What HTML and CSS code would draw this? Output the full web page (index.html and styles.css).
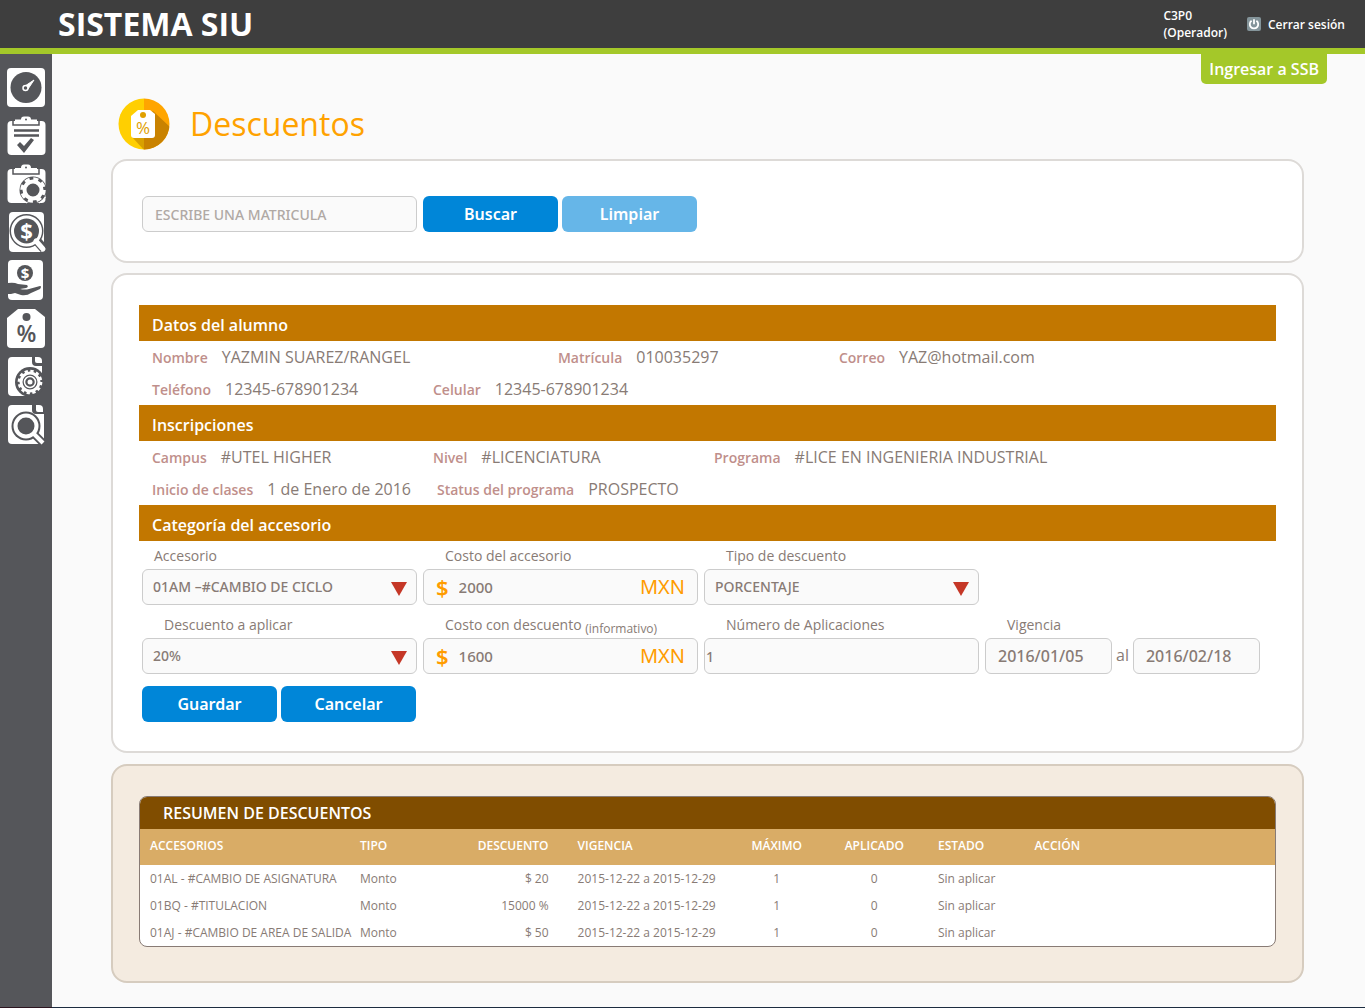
FILE: index.html
```html
<!DOCTYPE html>
<html lang="es">
<head>
<meta charset="utf-8">
<title>Sistema SIU - Descuentos</title>
<link rel="stylesheet" href="styles.css">
</head>
<body>
<header class="topbar">
  <div class="brand">SISTEMA SIU</div>
  <div class="user">C3P0<br>(Operador)</div>
  <a class="logout" href="#">
    <svg width="14" height="14" viewBox="0 0 14 14"><rect width="14" height="14" rx="2" fill="#84949a"/><path d="M4.6 3.8a4.2 4.2 0 1 0 4.8 0M7 2.2v5" fill="none" stroke="#fff" stroke-width="1.8"/></svg>
    Cerrar sesión
  </a>
</header>
<div class="layout">
  <nav class="sidebar" aria-label="Menú principal">
    <a href="#" aria-label="Tablero"><svg viewBox="0 0 40 40"><rect x="1" y="0" width="38" height="39" rx="4" fill="#fff"/><circle cx="20" cy="19.500" r="15.500" fill="#55565a"/><path d="M28 12l-9 6 3 3z" fill="#fff" stroke="#fff"/><circle cx="19.500" cy="20" r="2.500" fill="#55565a" stroke="#fff" stroke-width="1.500"/></svg></a>
    <a href="#" aria-label="Inscripciones"><svg viewBox="0 0 40 40"><rect x="1.500" y="5" width="38" height="34" rx="4" fill="#fff"/><path d="M7 4v5h26V4" fill="none" stroke="#55565a" stroke-width="1.500"/><path d="M9 3.500h6Q15 .5 18 .5h4Q25 .5 25 3.500h6V8H9z" fill="#fff"/><circle cx="20" cy="3.500" r="1" fill="#55565a"/><path d="M8 14.500h25M8 19.500h25" stroke="#55565a" stroke-width="2.500"/><path d="M11 29l3-3 4 4 7-8 3 2-10 13z" fill="#55565a"/></svg></a>
    <a href="#" aria-label="Configuración de trámites"><svg viewBox="0 0 40 40"><rect x="1.500" y="5" width="38" height="34" rx="4" fill="#fff"/><path d="M7 4v6h26V4" fill="none" stroke="#55565a" stroke-width="1.500"/><path d="M9 4h6Q15 .5 18 .5h4Q25 .5 25 4h6v4H9z" fill="#fff"/><circle cx="20" cy="3.500" r="1" fill="#55565a"/><circle cx="27" cy="26" r="13.500" fill="#55565a"/><circle cx="27" cy="26" r="8.500" fill="none" stroke="#fff" stroke-width="4"/><circle cx="27" cy="26" r="11" fill="none" stroke="#fff" stroke-width="3.500" stroke-dasharray="5 3.640"/><path d="M14.500 33a14 14 0 0 0 6 6M33.500 39a14 14 0 0 0 6-6" fill="none" stroke="#fff"/></svg></a>
    <a href="#" aria-label="Consulta de pagos"><svg viewBox="0 0 40 40"><rect x="3" y="0" width="35" height="40" rx="4" fill="#fff"/><circle cx="20.500" cy="19" r="17" fill="#55565a"/><path d="M31 29l7 8" stroke="#55565a" stroke-width="9"/><circle cx="20.500" cy="19" r="14" fill="#55565a" stroke="#fff" stroke-width="3"/><path d="M30 29l7 8" stroke="#fff" stroke-width="5" stroke-linecap="round"/><text x="20.500" y="27" class="icon-money">$</text></svg></a>
    <a href="#" aria-label="Pagos"><svg viewBox="0 0 40 40"><rect x="2" y="0" width="35" height="40" rx="4" fill="#fff"/><circle cx="19" cy="13" r="8" fill="#55565a"/><text x="19" y="18.500" class="icon-coin">$</text><path d="M2 23q6-1 10 1l9 1q2 2-1 3l-6 1q5 1 9 0l11-3q2 0 0 3l-9 4q-4 3-10 2l-6-2-4 1H2z" fill="#55565a"/></svg></a>
    <a href="#" aria-label="Descuentos"><svg viewBox="0 0 40 40"><path d="M12 1h17l10 8v27q0 4-4 4H5q-4 0-4-4V10z" fill="#fff"/><circle cx="20.500" cy="9" r="4" fill="#55565a"/><text x="20.500" y="34" class="icon-percent">%</text></svg></a>
    <a href="#" aria-label="Configuración"><svg viewBox="0 0 40 40"><path d="M6 1h20v5q0 4 4 4h6v12H24v18H6q-4 0-4-4V5q0-4 4-4z" fill="#fff"/><path d="M29 1h3q4 0 4 4v2h-5q-2 0-2-2z" fill="#fff"/><circle cx="24" cy="26" r="15" fill="#55565a"/><circle cx="24" cy="26" r="9" fill="none" stroke="#fff" stroke-width="3"/><circle cx="24" cy="26" r="11.100" fill="none" stroke="#fff" stroke-width="2.500" stroke-dasharray="3.300 2.512"/><circle cx="24" cy="26" r="5.500" fill="none" stroke="#fff" stroke-width="1.500"/><circle cx="24" cy="26" r="2.500" fill="#fff"/></svg></a>
    <a href="#" aria-label="Consultas"><svg viewBox="0 0 40 40"><path d="M6 1h20v5q0 4 4 4h8v26q0 4-4 4H6q-4 0-4-4V5q0-4 4-4z" fill="#fff"/><path d="M30 1h3q4 0 4 4v3h-5q-2 0-2-2z" fill="#fff"/><circle cx="20" cy="22" r="14.500" fill="#55565a"/><path d="M29 31l9 9" stroke="#55565a" stroke-width="8"/><circle cx="20" cy="22" r="10.500" fill="#55565a" stroke="#fff" stroke-width="4"/><circle cx="20" cy="22" r="7.500" fill="#55565a"/><path d="M28 30l9 9" stroke="#fff" stroke-width="4"/></svg></a>
  </nav>
  <main class="content">
    <a class="ssb" href="#">Ingresar a SSB</a>
    <div class="title">
      <svg width="52" height="52" viewBox="0 0 52 52" aria-hidden="true"><defs><clipPath id="disc"><circle cx="26" cy="26" r="25.500"/></clipPath></defs><g clip-path="url(#disc)"><path d="M0 0h26v52H0z" fill="#ffcf01"/><path d="M26 0h26v52H26z" fill="#ffa500"/><path d="M35 13l17 16v23H26V20z" fill="#c98200"/><path d="M14 39l12-5v18z" fill="#d8a000"/></g><path d="M20 12h12l5 4v21q0 3-3 3H16q-3 0-3-3V18z" fill="#fff"/><circle cx="25" cy="17" r="3" fill="#e0a000"/><text x="25" y="36" class="icon-tag">%</text></svg>
      <h1>Descuentos</h1>
    </div>
    <form class="panel search">
      <input class="box" type="text" placeholder="ESCRIBE UNA MATRICULA" aria-label="Matrícula">
      <div class="actions">
        <button class="btn" type="button">Buscar</button>
        <button class="btn light" type="button">Limpiar</button>
      </div>
    </form>
    <section class="panel detail">
      <h2>Datos del alumno</h2>
      <dl class="data wide">
        <div><dt>Nombre</dt><dd>YAZMIN SUAREZ/RANGEL</dd></div>
        <div><dt>Matrícula</dt><dd>010035297</dd></div>
        <div><dt>Correo</dt><dd>YAZ@hotmail.com</dd></div>
      </dl>
      <dl class="data">
        <div><dt>Teléfono</dt><dd>12345-678901234</dd></div>
        <div><dt>Celular</dt><dd>12345-678901234</dd></div>
      </dl>
      <h2>Inscripciones</h2>
      <dl class="data">
        <div><dt>Campus</dt><dd>#UTEL HIGHER</dd></div>
        <div><dt>Nivel</dt><dd>#LICENCIATURA</dd></div>
        <div class="span"><dt>Programa</dt><dd>#LICE EN INGENIERIA INDUSTRIAL</dd></div>
      </dl>
      <dl class="data inline">
        <div><dt>Inicio de clases</dt><dd>1 de Enero de 2016</dd></div>
        <div><dt>Status del programa</dt><dd>PROSPECTO</dd></div>
      </dl>
      <h2>Categoría del accesorio</h2>
      <form>
        <div class="fields">
          <div class="field near">
            <label for="accesorio">Accesorio</label>
            <div class="pick"><select class="box" id="accesorio"><option>01AM –#CAMBIO DE CICLO</option></select></div>
          </div>
          <div class="field">
            <label for="costo">Costo del accesorio</label>
            <div class="box money"><span class="sign">$</span><input id="costo" type="text" value="2000"><span>MXN</span></div>
          </div>
          <div class="field">
            <label for="tipo">Tipo de descuento</label>
            <div class="pick"><select class="box" id="tipo"><option>PORCENTAJE</option></select></div>
          </div>
        </div>
        <div class="fields">
          <div class="field">
            <label for="descuento">Descuento a aplicar</label>
            <div class="pick"><select class="box" id="descuento"><option>20%</option></select></div>
          </div>
          <div class="field">
            <label for="final">Costo con descuento <small>(informativo)</small></label>
            <div class="box money"><span class="sign">$</span><input id="final" type="text" value="1600"><span>MXN</span></div>
          </div>
          <div class="field">
            <label for="numero">Número de Aplicaciones</label>
            <input class="box tight" id="numero" type="text" value="1">
          </div>
          <div class="field">
            <label for="desde">Vigencia</label>
            <div class="range"><input class="box date" id="desde" type="text" value="2016/01/05"><span>al</span><input class="box date" type="text" value="2016/02/18" aria-label="Vigencia hasta"></div>
          </div>
        </div>
        <div class="actions">
          <button class="btn" type="button">Guardar</button>
          <button class="btn" type="button">Cancelar</button>
        </div>
      </form>
    </section>
    <section class="panel summary">
      <div class="card">
        <h3>RESUMEN DE DESCUENTOS</h3>
        <table>
          <colgroup><col class="c-acc"><col class="c-tipo"><col class="c-desc"><col class="c-vig"><col class="c-max"><col class="c-apl"><col class="c-est"><col></colgroup>
          <thead><tr><th>ACCESORIOS</th><th>TIPO</th><th class="num">DESCUENTO</th><th class="vig">VIGENCIA</th><th class="mid">MÁXIMO</th><th class="mid">APLICADO</th><th>ESTADO</th><th>ACCIÓN</th></tr></thead>
          <tbody>
            <tr><td>01AL - #CAMBIO DE ASIGNATURA</td><td>Monto</td><td class="num">$ 20</td><td class="vig">2015-12-22 a 2015-12-29</td><td class="mid">1</td><td class="mid">0</td><td>Sin aplicar</td><td></td></tr>
            <tr><td>01BQ - #TITULACION</td><td>Monto</td><td class="num">15000 %</td><td class="vig">2015-12-22 a 2015-12-29</td><td class="mid">1</td><td class="mid">0</td><td>Sin aplicar</td><td></td></tr>
            <tr><td>01AJ - #CAMBIO DE AREA DE SALIDA</td><td>Monto</td><td class="num">$ 50</td><td class="vig">2015-12-22 a 2015-12-29</td><td class="mid">1</td><td class="mid">0</td><td>Sin aplicar</td><td></td></tr>
          </tbody>
        </table>
      </div>
    </section>
  </main>
</div>
</body>
</html>
```
FILE: styles.css
```css
* { box-sizing: border-box; }
body {
  margin: 0;
  min-height: 100vh;
  display: flex;
  flex-direction: column;
  background: #fafafa;
  color: #887b75;
  font: 16px/24px "Open Sans", sans-serif;
}
h1, h2, h3, dl, dd { margin: 0; }
a { text-decoration: none; }

.topbar {
  display: flex;
  align-items: center;
  height: 54px;
  padding: 0 20px 0 58px;
  background: #3e3e3e;
  border-bottom: 6px solid #a4c829;
  color: #fff;
  font-size: 12px;
  font-weight: 600;
  line-height: 17px;
}
.brand { flex: 1; font-size: 32px; line-height: 48px; font-weight: 700; }
.logout { display: flex; align-items: center; gap: 7px; margin-left: 20px; color: #fff; }

.layout { display: flex; flex: 1; }
.sidebar {
  display: flex;
  flex-direction: column;
  gap: 8px;
  flex: none;
  width: 52px;
  padding: 14px 6px;
  background: #55565a;
  border-bottom: 1px solid #2c1420;
}
.sidebar a { display: block; height: 40px; }
.sidebar svg { display: block; width: 40px; height: 40px; overflow: visible; }
.icon-money, .icon-coin, .icon-percent, .icon-tag { font-family: "Open Sans", sans-serif; font-weight: 700; text-anchor: middle; fill: #fff; }
.icon-money { font-size: 22px; }
.icon-coin { font-size: 15px; }
.icon-percent { font-size: 23px; font-weight: 600; fill: #55565a; }
.icon-tag { font-size: 17px; font-weight: 500; fill: #e0a000; }

.content {
  position: relative;
  flex: 1;
  display: flex;
  flex-direction: column;
  gap: 10px;
  min-width: 0;
  padding: 44px 61px 24px 59px;
  border-bottom: 1px solid #1c2c40;
}
.ssb {
  position: absolute;
  top: 0;
  right: 38px;
  padding: 3px 8px;
  border-radius: 0 0 5px 5px;
  background: #a4c829;
  color: #fff;
  font-weight: 600;
}
.title { display: flex; align-items: center; gap: 20px; height: 51px; padding-left: 7px; }
.title h1 { font-size: 32px; line-height: 50px; font-weight: 400; color: #ffa200; }

.panel { background: #fff; border: 2px solid #dddad7; border-radius: 16px; padding: 30px 26px; }
.search { display: flex; gap: 6px; padding: 35px 29px 29px; }
.search .box { width: 275px; }
.search ::placeholder { color: #b0a9a5; opacity: 1; }

.box {
  display: block;
  width: 100%;
  height: 36px;
  padding: 0 12px;
  background: #fafafa;
  border: 1px solid #ccc;
  border-radius: 6px;
  color: #887b75;
  font: 500 14px/20px "Noto Sans", sans-serif;
}
.actions { display: flex; gap: 4px; }
.btn {
  width: 135px;
  height: 36px;
  padding: 0;
  border: 0;
  border-radius: 6px;
  background: #0086d8;
  color: #fff;
  font: 600 16px/20px "Noto Sans", sans-serif;
}
.btn.light { background: #66b6e8; }

h2 { height: 36px; padding: 2px 13px; background: #c27700; color: #fff; font-size: 16px; line-height: 36px; font-weight: 600; }
.data { display: grid; grid-template-columns: repeat(4, 1fr); padding-left: 13px; line-height: 32px; white-space: nowrap; }
.data.wide { grid-template-columns: 13fr 9fr 14fr; }
.data.inline { display: flex; gap: 26px; }
.data div { display: flex; align-items: baseline; height: 32px; gap: 14px; }
.data .span { grid-column: span 2; }
dt { font-size: 14px; font-weight: 600; color: #bf8f8b; }

.fields { display: grid; grid-template-columns: repeat(4, 1fr); padding: 0 10px 0 3px; }
.field { width: 275px; padding-bottom: 5px; }
.field label { display: block; height: 28px; padding-left: 22px; font-size: 14px; line-height: 30px; }
.near label { padding-left: 12px; }
small { font-size: 12px; vertical-align: -3px; line-height: 12px; }
.pick { position: relative; }
.pick select { appearance: none; padding: 0 10px; }
.pick::after {
  content: "";
  position: absolute;
  right: 10px;
  top: 13px;
  border: 8px solid transparent;
  border-top: 14px solid #c53727;
  border-bottom: 0;
  pointer-events: none;
}
.money { display: flex; align-items: center; gap: 10px; color: #ff9c00; font: 20px/34px "Noto Sans", sans-serif; }
.money .sign { font-size: 22px; font-weight: 600; }
.money input { flex: 1; min-width: 0; padding: 0; border: 0; background: none; color: #887b75; font: 500 15px/20px "Noto Sans", sans-serif; }
.tight { padding: 0 1px; }
.range { display: flex; gap: 4px; line-height: 34px; }
.range .date { width: 127px; font-size: 16px; }
.detail .actions { margin: 7px 3px 0; }
.detail { padding-bottom: 29px; }

.summary { background: #f4ebe0; border-color: #d6ccbf; margin-top: 1px; padding-bottom: 34px; }
.card { overflow: hidden; background: #fff; border: 1px solid #887b75; border-radius: 8px; }
h3 { height: 32px; padding-left: 23px; background: #804d00; color: #fff; font-size: 16px; line-height: 32px; font-weight: 600; }
table { width: 100%; table-layout: fixed; border-collapse: collapse; font-size: 12px; line-height: 27px; }
th, td { padding: 0 0 0 10px; text-align: left; white-space: nowrap; }
th { height: 36px; padding-bottom: 3px; background: #d9ac66; color: #fff; font-weight: 600; }
.num { text-align: right; }
.mid { text-align: center; padding-left: 0; }
.vig { padding-left: 29px; }
.c-acc { width: 18.500%; }
.c-tipo { width: 9%; }
.c-desc { width: 8.500%; }
.c-vig { width: 15.700%; }
.c-max { width: 8.800%; }
.c-apl { width: 8.400%; }
.c-est { width: 8.500%; }
td:nth-child(7), th:nth-child(7) { padding-left: 16px; }
td:nth-child(8), th:nth-child(8) { padding-left: 16px; }
```
